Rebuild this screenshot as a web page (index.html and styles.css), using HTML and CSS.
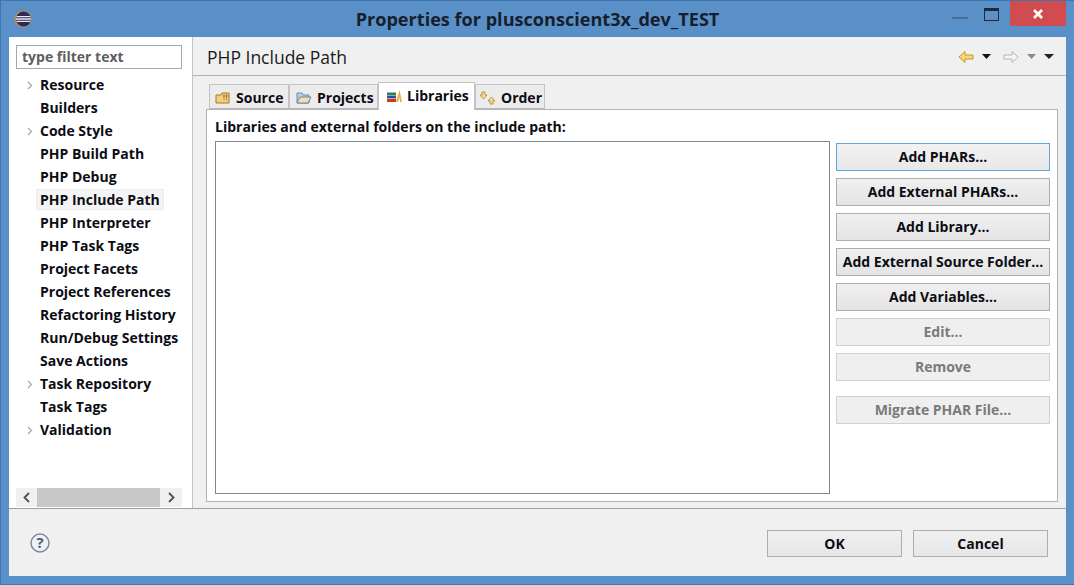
FILE: index.html
```html
<!DOCTYPE html>
<html lang="en">
<head>
<meta charset="utf-8">
<title>Properties</title>
<link rel="stylesheet" href="styles.css">
</head>
<body>
<div class="window">
  <header class="titlebar">
    <svg class="app-icon" width="18" height="18" viewBox="0 0 18 18"><circle cx="9" cy="9" r="8.5" fill="#c98a3a"/><circle cx="9.5" cy="9" r="7.5" fill="#2c2a5c"/><path d="M2.5 6.6h14M2 9h15M2.5 11.4h14" stroke="#e8e8f2" stroke-width="1.3"/></svg>
    <h1 class="title">Properties for plusconscient3x_dev_TEST</h1>
    <div class="win-controls">
      <span class="win-min"></span>
      <span class="win-max"></span>
      <span class="win-close"><svg width="12" height="10" viewBox="0 0 12 10"><path d="M2 1l8 8M10 1l-8 8" stroke="#fff" stroke-width="2.6"/></svg></span>
    </div>
  </header>
  <div class="client">
    <div class="main">
      <aside class="sidebar">
        <div class="filter">type filter text</div>
        <ul class="tree">
          <li class="node"><svg class="chev" width="6" height="9" viewBox="0 0 6 9"><path d="M1 1l3.5 3.5L1 8" fill="none" stroke="#a6a6a6" stroke-width="1.2"/></svg><span>Resource</span></li>
          <li class="node"><span>Builders</span></li>
          <li class="node"><svg class="chev" width="6" height="9" viewBox="0 0 6 9"><path d="M1 1l3.5 3.5L1 8" fill="none" stroke="#a6a6a6" stroke-width="1.2"/></svg><span>Code Style</span></li>
          <li class="node"><span>PHP Build Path</span></li>
          <li class="node"><span>PHP Debug</span></li>
          <li class="node"><span class="selected">PHP Include Path</span></li>
          <li class="node"><span>PHP Interpreter</span></li>
          <li class="node"><span>PHP Task Tags</span></li>
          <li class="node"><span>Project Facets</span></li>
          <li class="node"><span>Project References</span></li>
          <li class="node"><span>Refactoring History</span></li>
          <li class="node"><span>Run/Debug Settings</span></li>
          <li class="node"><span>Save Actions</span></li>
          <li class="node"><svg class="chev" width="6" height="9" viewBox="0 0 6 9"><path d="M1 1l3.5 3.5L1 8" fill="none" stroke="#a6a6a6" stroke-width="1.2"/></svg><span>Task Repository</span></li>
          <li class="node"><span>Task Tags</span></li>
          <li class="node"><svg class="chev" width="6" height="9" viewBox="0 0 6 9"><path d="M1 1l3.5 3.5L1 8" fill="none" stroke="#a6a6a6" stroke-width="1.2"/></svg><span>Validation</span></li>
        </ul>
        <div class="hscroll">
          <svg class="sb-arrow" width="21" height="19" viewBox="0 0 21 19"><path d="M13 5l-4.500 4.500L13 14" fill="none" stroke="#505050" stroke-width="1.800"/></svg>
          <div class="sb-thumb"></div>
          <svg class="sb-arrow" width="22" height="19" viewBox="0 0 22 19"><path d="M9 5l4.500 4.500L9 14" fill="none" stroke="#505050" stroke-width="1.800"/></svg>
        </div>
      </aside>
      <section class="content">
        <div class="page-head">
          <h2 class="page-title">PHP Include Path</h2>
          <div class="nav-tools">
            <svg width="16" height="14" viewBox="0 0 16 14"><path d="M1 7l6-5.500V5h8v4H7v3.500z" fill="#f6d675" stroke="#c29a2c"/></svg>
            <svg class="tri" width="9" height="5" viewBox="0 0 9 5"><path d="M0 0h9L4.500 5z" fill="#111"/></svg>
            <svg class="fwd" width="16" height="14" viewBox="0 0 16 14"><path d="M15 7L9 1.500V5H1v4h8v3.500z" fill="#f6f6f6" stroke="#b4b4b4"/></svg>
            <svg class="tri" width="9" height="5" viewBox="0 0 9 5"><path d="M0 0h9L4.500 5z" fill="#8a8a8a"/></svg>
            <svg class="tri" width="10" height="5" viewBox="0 0 10 5"><path d="M0 0h10L5 5z" fill="#222"/></svg>
          </div>
        </div>
        <div class="tabs-area">
          <div class="tabs">
            <div class="tab tab-source">
              <svg width="16" height="14" viewBox="0 0 16 14"><path d="M1 12V4h5l1-2h7v10z" fill="#f1cf7c" stroke="#a5782b"/><path d="M9 3v6M11.500 3v6M7.500 5h6" stroke="#a5782b" stroke-width=".8"/></svg>
              <span>Source</span>
            </div>
            <div class="tab tab-projects">
              <svg width="16" height="14" viewBox="0 0 16 14"><path d="M1 12V2h5l1 2h6v8z" fill="#b9cfe8" stroke="#6b86a8"/><path d="M1 12l3-6h11l-3 6z" fill="#f4dfa6" stroke="#6b86a8"/></svg>
              <span>Projects</span>
            </div>
            <div class="tab tab-libraries">
              <svg width="16" height="14" viewBox="0 0 16 14"><path d="M1 3.500h9v2.500H1z" fill="#2f7f4d"/><path d="M1 6.500h9v2.500H1z" fill="#2a4fa0"/><path d="M1 9.500h9V13H1z" fill="#b8402f"/><path d="M10 13l3.500-12L16 13h-2l-.5-5-1.500 5z" fill="#e2b43c"/></svg>
              <span>Libraries</span>
            </div>
            <div class="tab tab-order">
              <svg width="16" height="14" viewBox="0 0 16 14"><path d="M2 1h3v3h2L3.500 8 0 4h2z" fill="#f3dc8e" stroke="#a98a2c" stroke-width=".8"/><path d="M10 13h3v-3h2l-3.500-4L8 10h2z" fill="#f3dc8e" stroke="#a98a2c" stroke-width=".8"/></svg>
              <span>Order</span>
            </div>
          </div>
          <div class="panel">
            <div class="panel-label">Libraries and external folders on the include path:</div>
            <div class="panel-body">
              <div class="list"></div>
              <div class="buttons">
                <button class="btn focused">Add PHARs...</button>
                <button class="btn">Add External PHARs...</button>
                <button class="btn">Add Library...</button>
                <button class="btn">Add External Source Folder...</button>
                <button class="btn">Add Variables...</button>
                <button class="btn" disabled>Edit...</button>
                <button class="btn" disabled>Remove</button>
                <button class="btn migrate" disabled>Migrate PHAR File...</button>
              </div>
            </div>
          </div>
        </div>
      </section>
    </div>
    <footer class="footer">
      <svg class="help" width="20" height="20" viewBox="0 0 20 20"><circle cx="10" cy="10" r="9" fill="#eef2f7" stroke="#7d84a6" stroke-width="1.400"/><text x="10" y="15" text-anchor="middle" class="help-mark">?</text></svg>
      <div class="footer-btns">
        <button class="dlg-btn">OK</button>
        <button class="dlg-btn">Cancel</button>
      </div>
    </footer>
  </div>
</div>
</body>
</html>
```

FILE: styles.css
```css
* { box-sizing: border-box; }
html, body { margin: 0; padding: 0; }
body { width: 1074px; height: 585px; overflow: hidden; font-family: "Open Sans", "Noto Sans", sans-serif; font-weight: 700; font-size: 14px; color: #0c0c14; }
.window { width: 1074px; height: 585px; display: flex; flex-direction: column; background: #5a90c8; padding: 0 8px 8px 8px; border: 1px solid #3f76ad; border-width: 1px 0 1px 1px; }
.titlebar { height: 36px; flex: none; display: flex; align-items: center; position: relative; }
.app-icon { margin: 0 0 0 5px; flex: none; }
.title { flex: 1; margin: 0; text-align: center; font-size: 18.1px; font-weight: 700; color: #16202c; line-height: 36px; padding-right: 23px; font-family: "Open Sans", sans-serif; }
.win-controls { display: flex; position: absolute; right: 0; top: 0; height: 26px; align-items: flex-start; }
.win-min { width: 16px; height: 2px; background: #4a6c90; margin-top: 16px; }
.win-max { width: 15px; height: 13px; margin: 7px 0 0 16px; border: 1px solid #1c2c40; border-top-width: 3px; background: #5f8fc4; }
.win-close { width: 56px; height: 25px; margin: 0 0 0 11px; background: #d04c4f; display: flex; align-items: center; justify-content: center; }
.client { flex: 1; display: flex; flex-direction: column; background: #f0f0f0; min-height: 0; }
.main { height: 472px; flex: none; display: flex; border-bottom: 1px solid #a0a0a0; }
.sidebar { width: 184px; flex: none; background: #fff; border-right: 1px solid #c4c4c4; padding: 8px 10px 0 7px; display: flex; flex-direction: column; }
.filter { height: 24px; border: 1px solid #a8a8a8; padding-left: 5px; line-height: 21px; color: #5e5e5e; flex: none; width: 166px; }
.tree { list-style: none; margin: 4px 0 0; padding: 0; flex: 1; }
.node { height: 23px; display: flex; align-items: center; padding-left: 24px; position: relative; line-height: 21px; white-space: nowrap; }
.chev { position: absolute; left: 11px; top: 8px; }
.selected { background: #f4f4f4; border: 1px solid #ececec; margin-left: -4px; padding: 0 3px; line-height: 19px; }
.hscroll { height: 19px; width: 166px; display: flex; background: #f0f0f0; flex: none; margin-bottom: 1px; }
.sb-arrow { flex: none; }
.sb-thumb { width: 123px; background: #c8c8c8; }
.content { flex: 1; display: flex; flex-direction: column; min-width: 0; }
.page-head { height: 39px; flex: none; display: flex; align-items: center; justify-content: space-between; border-bottom: 1px solid #b4b4b4; padding: 1px 12px 0 14px; }
.page-title { margin: 0; font-size: 17.5px; font-weight: 400; color: #1a1a1a; font-family: "Open Sans", sans-serif; }
.nav-tools { display: flex; align-items: center; gap: 8px; }
.fwd { margin-left: 4px; }
.tabs-area { flex: 1; display: flex; flex-direction: column; padding: 5px 8px 6px 13px; min-height: 0; }
.tabs { height: 28px; flex: none; display: flex; align-items: flex-end; padding-left: 3px; position: relative; z-index: 1; }
.tab { height: 25px; display: flex; align-items: center; gap: 5px; padding: 2px 0 0 5px; background: #ececec; border: 1px solid #c4c4c4; border-bottom: 1px solid #b8b8b8; line-height: 22px; flex: none; }
.tab-source { width: 80px; }
.tab-projects { width: 89px; padding-left: 6px; }
.tab-libraries { width: 97px; height: 28px; background: #fff; border-bottom: 0; padding: 0 0 1px 7px; margin-bottom: -1px; }
.tab-order { width: 70px; padding-left: 4px; }
.panel { flex: 1; background: #fff; border: 1px solid #b4b4b4; padding: 7px 8px 7px 8px; display: flex; flex-direction: column; min-height: 0; }
.panel-label { height: 24px; line-height: 19px; flex: none; }
.panel-body { flex: 1; display: flex; gap: 6px; min-height: 0; }
.list { width: 615px; flex: none; border: 1px solid #828790; background: #fff; }
.buttons { width: 214px; flex: none; display: flex; flex-direction: column; gap: 7px; padding-top: 2px; }
.btn { height: 28px; flex: none; font: inherit; color: inherit; background: linear-gradient(#f0f0f0, #e4e4e4); border: 1px solid #adadad; padding: 0 0 2px; white-space: nowrap; }
.btn.focused { border-color: #5ea6dc; background: linear-gradient(#f2f2f2, #e8e8e8); }
.btn:disabled { color: #7a7a7a; background: #efefef; border-color: #d0d0d0; }
.btn.migrate { margin-top: 8px; }
.footer { flex: 1; display: flex; align-items: center; justify-content: space-between; padding: 2px 18px 0 21px; }
.help { flex: none; position: relative; top: -1px; }
.help-mark { font-size: 15px; font-weight: 700; fill: #555a78; }
.footer-btns { display: flex; gap: 11px; }
.dlg-btn { width: 135px; height: 27px; font: inherit; color: inherit; background: linear-gradient(#f0f0f0, #e6e6e6); border: 1px solid #adadad; padding: 0; }
```
